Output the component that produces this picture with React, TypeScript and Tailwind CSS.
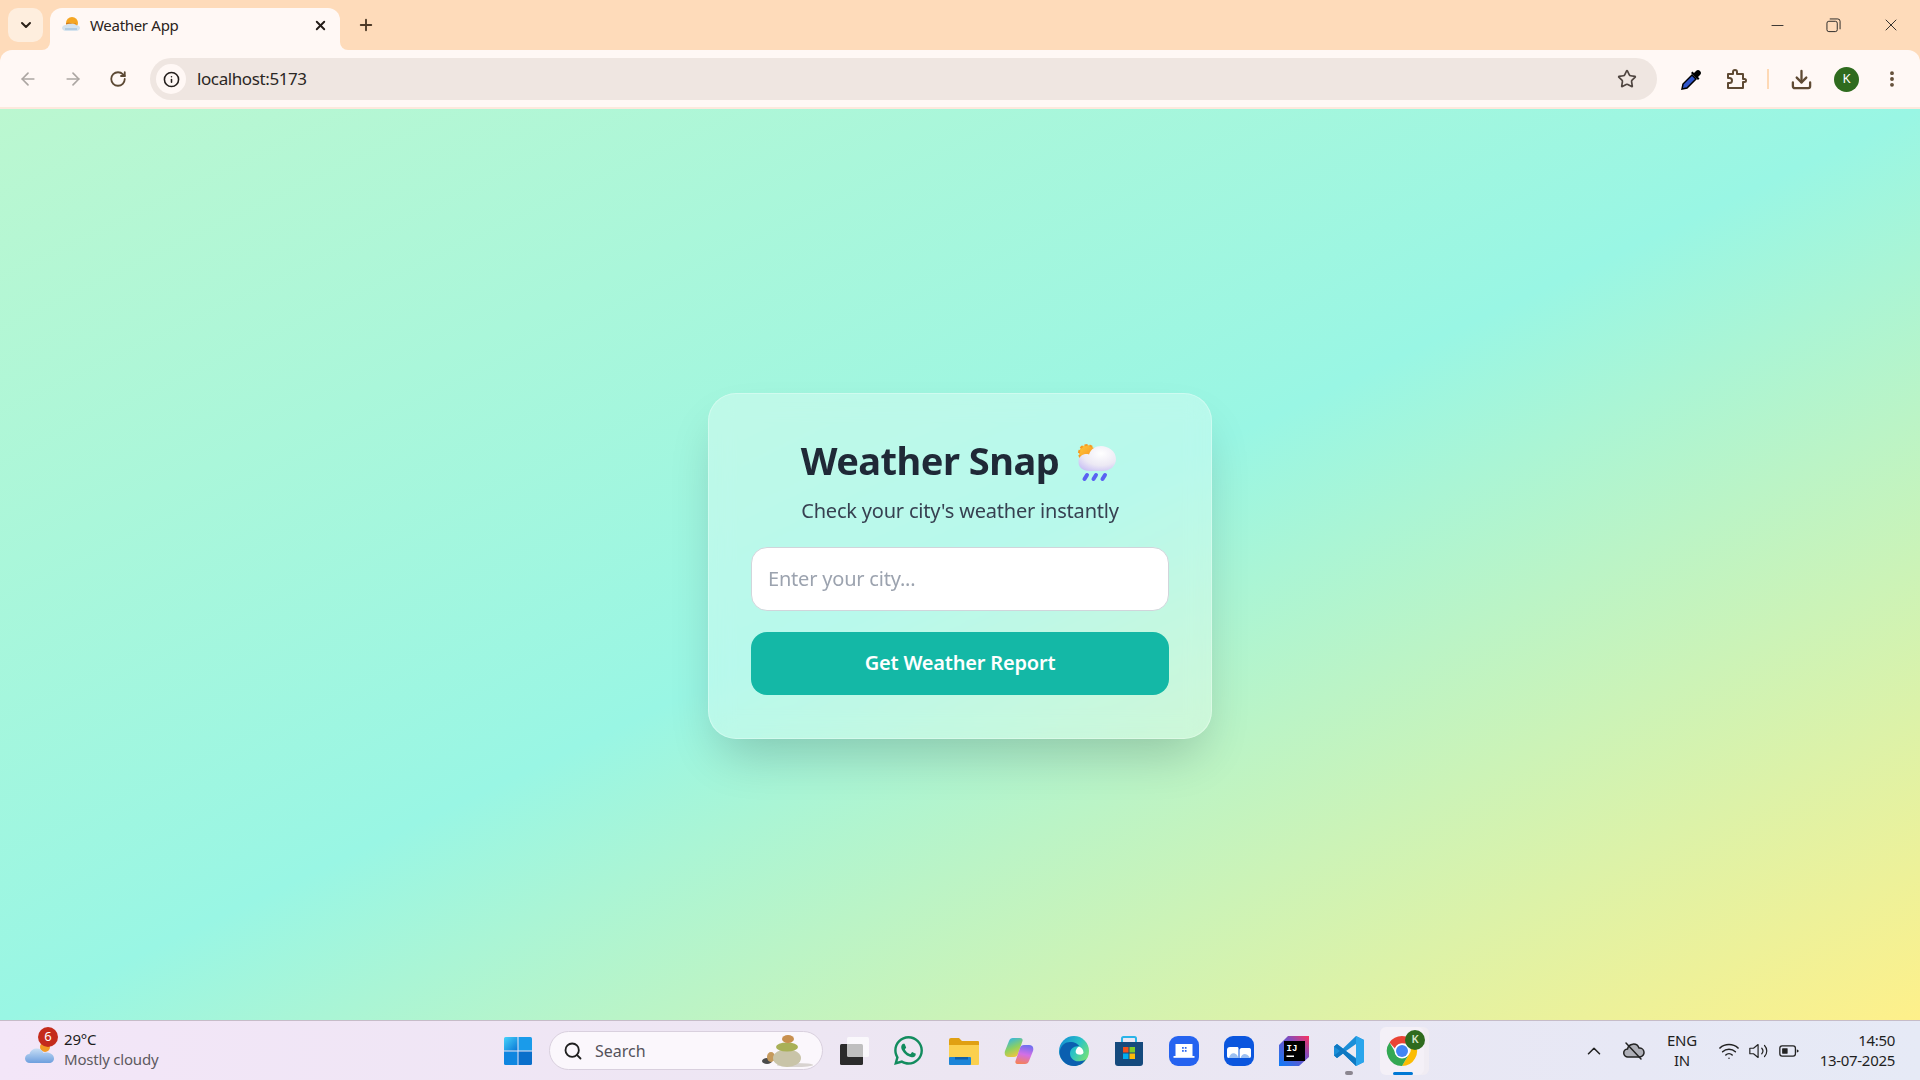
import {
  ArrowLeft,
  ArrowRight,
  ChevronDown,
  ChevronUp,
  Download,
  EllipsisVertical,
  Info,
  Minus,
  Plus,
  RotateCw,
  Search,
  Star,
  Wifi,
  X,
} from "lucide-react";
import { FaWhatsapp } from "react-icons/fa";

const font = "font-['Noto_Sans','Open_Sans',sans-serif]";

const WeatherEmoji = () => (
  <svg viewBox="0 0 60 60" className="w-[60px] h-[60px] shrink-0 -mx-[4px]">
    <defs>
      <radialGradient id="cloudA" cx="0.6" cy="0.3" r="0.8">
        <stop offset="0" stopColor="#ffffff" />
        <stop offset="0.6" stopColor="#ece9f4" />
        <stop offset="1" stopColor="#c9c0f5" />
      </radialGradient>
      <linearGradient id="sunA" x1="0" y1="0" x2="1" y2="1">
        <stop offset="0" stopColor="#ffc93a" />
        <stop offset="1" stopColor="#f58a1f" />
      </linearGradient>
    </defs>
    <circle cx="24" cy="22" r="8" fill="url(#sunA)" stroke="#f79a20" strokeWidth="2" strokeDasharray="3 2" />
    <path
      d="M26 40c-6 0-10.500-3.500-10.500-9s4-8 8-8c1 0 1.500.1 2.500.4C28 18 32.500 15 38 15c7 0 15 5 15 13 0 7-6 12-13 12z"
      fill="url(#cloudA)"
    />
    <g stroke="#5a62f2" strokeWidth="4" strokeLinecap="round">
      <path d="M24 44l-2.500 4" />
      <path d="M33 44l-2.500 4" />
      <path d="M42 44l-2.500 4" />
    </g>
  </svg>
);

const Favicon = () => (
  <svg viewBox="0 0 20 20" className="w-[20px] h-[20px] shrink-0">
    <circle cx="11" cy="8" r="6" fill="#f5a623" />
    <path d="M5 9c2-1 3-1 5 0s4 0 5 0" stroke="#c56a1a" strokeWidth="1" fill="none" />
    <path d="M5 16c-2.500 0-4-1.500-4-3s1.500-3 3.500-3c2-1.500 9-2 11 .2 2 0 3.500 1.300 3.500 2.800S17.500 16 15 16z" fill="#d5e3ee" />
    <path d="M4 14h12" stroke="#8fb6d6" strokeWidth="1" />
  </svg>
);

const Eyedropper = () => (
  <svg viewBox="0 0 24 24" className="w-[24px] h-[24px]">
    <path d="M13 8l4 4-9 9-5 1 1-5z" fill="#2f55c9" stroke="#000" strokeWidth="1.500" />
    <path d="M12 6l7 7 1.500-1.500-1.500-1.500 2-2a2.500 2.500 0 0 0-4-4l-2 2-1.500-1.500z" fill="#000" />
  </svg>
);

const PuzzleIcon = () => (
  <svg viewBox="0 0 24 24" className="w-[24px] h-[24px]" fill="none" stroke="#5f4a33" strokeWidth="2" strokeLinejoin="round">
    <path d="M4 7h5V5a2 2 0 0 1 4 0v2h6v5h1.500a1.500 1.500 0 0 1 0 3H19v6H4v-5h1.500a2.500 2.500 0 0 0 0-5H4z" />
  </svg>
);

const WindowsLogo = () => (
  <svg viewBox="0 0 30 30" className="w-[30px] h-[30px]">
    <defs>
      <linearGradient id="winA" x1="0" y1="0" x2="1" y2="1">
        <stop offset="0" stopColor="#47d3fb" />
        <stop offset="1" stopColor="#0a78d6" />
      </linearGradient>
    </defs>
    <path d="M1 2.500A1.500 1.500 0 0 1 2.500 1H14.500V14.500H1z" fill="url(#winA)" />
    <path d="M15.500 1h12A1.500 1.500 0 0 1 29 2.500V14.500H15.500z" fill="#1a9bea" />
    <path d="M1 15.500H14.500V29H2.500A1.500 1.500 0 0 1 1 27.500z" fill="#0f86e0" />
    <path d="M15.500 15.500H29v12a1.500 1.500 0 0 1-1.500 1.500h-12z" fill="#0a6fcb" />
  </svg>
);

const Stones = () => (
  <svg viewBox="0 0 56 36" className="w-[56px] h-[36px]">
    <ellipse cx="38" cy="32" rx="18" ry="2" fill="#d8d3d0" />
    <ellipse cx="10" cy="28" rx="5" ry="3" fill="#4b4b4b" />
    <ellipse cx="14" cy="24" rx="4" ry="5" fill="#c69a5d" />
    <ellipse cx="30" cy="25" rx="14" ry="9" fill="#c9c4a8" />
    <ellipse cx="30" cy="14" rx="11" ry="4.500" fill="#a9b057" />
    <ellipse cx="31" cy="6" rx="6" ry="4" fill="#c8904f" />
  </svg>
);

const TaskView = () => (
  <svg viewBox="0 0 32 32" className="w-[32px] h-[32px]">
    <rect x="2" y="9" width="23" height="21" rx="1.500" fill="#2b2b2b" />
    <rect x="9" y="2" width="22" height="20" rx="1.500" fill="#ffffff" fillOpacity="0.7" />
  </svg>
);

const FolderIcon = () => (
  <svg viewBox="0 0 32 32" className="w-[32px] h-[32px]">
    <path d="M1 5a2 2 0 0 1 2-2h8l3 3h16a1 1 0 0 1 1 1v3H1z" fill="#e0a012" />
    <path d="M1 10h30v19a1 1 0 0 1-1 1H2a1 1 0 0 1-1-1z" fill="#fbd04e" />
    <rect x="1" y="22" width="22" height="8" fill="#1b84d8" rx="1" />
    <rect x="7" y="22" width="13" height="2.500" fill="#0f5fa8" />
  </svg>
);

const CopilotIcon = () => (
  <svg viewBox="0 0 32 32" className="w-[32px] h-[32px]">
    <defs>
      <linearGradient id="copA" x1="0.2" y1="0" x2="0.6" y2="1">
        <stop offset="0" stopColor="#2fb4e9" />
        <stop offset="0.55" stopColor="#8fd05f" />
        <stop offset="1" stopColor="#f4c53e" />
      </linearGradient>
      <linearGradient id="copB" x1="0.6" y1="0" x2="0.4" y2="1">
        <stop offset="0" stopColor="#6f6ff0" />
        <stop offset="0.5" stopColor="#d36fe6" />
        <stop offset="1" stopColor="#f4815a" />
      </linearGradient>
    </defs>
    <path d="M10 3h7c2 0 3 1 2.500 3L15 19c-.5 2-2 3-4 3H6c-3.500 0-5-2.500-4-6L6 6C6.700 4 8 3 10 3z" fill="url(#copA)" />
    <path d="M22 29h-7c-2 0-3-1-2.500-3L17 13c.5-2 2-3 4-3h5c3.500 0 5 2.500 4 6l-4 10c-.7 2-2 3-4 3z" fill="url(#copB)" />
  </svg>
);

const EdgeIcon = () => (
  <svg viewBox="0 0 32 32" className="w-[32px] h-[32px]">
    <defs>
      <linearGradient id="edgeA" x1="0" y1="0" x2="1" y2="0.6">
        <stop offset="0" stopColor="#0f86d6" />
        <stop offset="0.6" stopColor="#2bc3c6" />
        <stop offset="1" stopColor="#72e07a" />
      </linearGradient>
    </defs>
    <circle cx="16" cy="16" r="15" fill="url(#edgeA)" />
    <path d="M1.500 18C2 10 8 7 12 7c5 0 8 2 9.500 4.500-5-1-9.500 2-9.500 7s5 9 11 7.500c2 0 4-1 5-2-3 5-7 7-12 7-8 0-14-6-14.500-13.500z" fill="#0b5fb0" />
    <path d="M21 11.500c2.500 1 4.500 3 4.500 6 0 1.500-2 2.500-5 2-3-.6-3.500-3-2-5.500.5-1 1.500-2 2.500-2.500z" fill="#fff" />
  </svg>
);

const StoreIcon = () => (
  <svg viewBox="0 0 30 32" className="w-[30px] h-[32px]">
    <path d="M8 7V3.500A1.500 1.500 0 0 1 9.500 2h11A1.500 1.500 0 0 1 22 3.500V7" fill="none" stroke="#2bb4e8" strokeWidth="2" />
    <path d="M1 7h28v21a3 3 0 0 1-3 3H4a3 3 0 0 1-3-3z" fill="#154a7d" />
    <rect x="9" y="12" width="5.500" height="5.500" fill="#f1511b" />
    <rect x="15.500" y="12" width="5.500" height="5.500" fill="#80cc28" />
    <rect x="9" y="18.500" width="5.500" height="5.500" fill="#00adef" />
    <rect x="15.500" y="18.500" width="5.500" height="5.500" fill="#fbbc09" />
  </svg>
);

const LaptopApp = () => (
  <svg viewBox="0 0 30 30" className="w-[30px] h-[30px]">
    <rect width="30" height="30" rx="9" fill="#2563f0" />
    <rect x="6.500" y="8" width="17" height="12" fill="#fff" />
    <rect x="4.500" y="20" width="21" height="1.800" fill="#fff" />
    <g fill="#2563f0">
      <rect x="13" y="11" width="1.800" height="1.800" rx="0.500" />
      <rect x="15.800" y="11" width="1.800" height="1.800" rx="0.500" />
      <rect x="13" y="14" width="1.800" height="1.800" rx="0.500" />
      <rect x="15.800" y="14" width="1.800" height="1.800" rx="0.500" />
    </g>
  </svg>
);

const BookApp = () => (
  <svg viewBox="0 0 30 30" className="w-[30px] h-[30px]">
    <rect width="30" height="30" rx="9" fill="#0b56de" />
    <path d="M3 14c0-2 1-3 3-3h7c1 0 1.500.5 1.500 1.500V22H5c-1.500 0-2-1-2-2z" fill="#fff" />
    <path d="M15.500 14c0-1 1-2 2-2h8c1 0 1.500 1 1.500 2v6c0 1-.5 2-2 2H15.500z" fill="#fff" />
    <path d="M5 22c1-5 5-6 8-3l1.500 3z" fill="#9cc0f2" />
    <path d="M16.500 22c1.500-5 6-5 9-1v1z" fill="#9cc0f2" />
  </svg>
);

const IntellijIcon = () => (
  <svg viewBox="0 0 32 32" className="w-[32px] h-[32px]">
    <defs>
      <linearGradient id="ijA" x1="0" y1="1" x2="1" y2="0">
        <stop offset="0" stopColor="#087cfa" />
        <stop offset="0.6" stopColor="#7a4fc4" />
        <stop offset="1" stopColor="#fe315d" />
      </linearGradient>
    </defs>
    <path d="M10 1h21v21L21 31H1V10z" fill="url(#ijA)" />
    <rect x="6" y="6" width="21" height="20" fill="#000" />
    <text x="8.500" y="15.500" fontSize="9" fontWeight="700" fill="#fff" fontFamily="Liberation Mono, monospace">IJ</text>
    <rect x="8.500" y="20.500" width="7.500" height="1.500" fill="#fff" />
  </svg>
);

const VscodeIcon = () => (
  <svg viewBox="0 0 32 32" className="w-[32px] h-[32px]">
    <path d="M23 1l8 4v22l-8 4-13-12.500L4 23l-3-2.500V11.500L4 9l6 4.500z" fill="#1b8fd8" />
    <path d="M23 1l8 4v22l-8 4z" fill="#2aa5ec" />
    <path d="M23 9L13 16l10 7z" fill="#eceaf2" />
    <path d="M1 11.500L4 9l19 15v7l-13-12.500L4 23l-3-2.500L7 16z" fill="#0e78c2" />
  </svg>
);

const ChromeIcon = () => (
  <svg viewBox="0 0 32 32" className="w-[32px] h-[32px]">
    <path d="M16 1a15 15 0 0 1 13 7.500H16a7.500 7.500 0 0 0-7 5L3.500 7.500A15 15 0 0 1 16 1z" fill="#ea4335" />
    <path d="M29 8.500A15 15 0 0 1 16 31l6.500-11a7.500 7.500 0 0 0-.5-11.500z" fill="#fbbc04" />
    <path d="M16 31A15 15 0 0 1 3.500 7.500L10 18.500a7.500 7.500 0 0 0 12.500 1.500L16 31z" fill="#34a853" />
    <circle cx="16" cy="16" r="7.500" fill="#fff" />
    <circle cx="16" cy="16" r="6" fill="#4285f4" />
  </svg>
);

const CloudOff = () => (
  <svg viewBox="0 0 24 24" className="w-[24px] h-[24px]" fill="none" stroke="#222" strokeWidth="1.500" strokeLinecap="round">
    <path d="M6 18a4 4 0 0 1-.5-8 6 6 0 0 1 11.500-1 4.500 4.500 0 0 1 1 9z" fill="#444" fillOpacity="0.35" />
    <path d="M4 4l15 16" />
  </svg>
);

const VolumeIcon = () => (
  <svg viewBox="0 0 24 24" className="w-[22px] h-[22px]" fill="none" stroke="#222" strokeWidth="1.300" strokeLinejoin="round" strokeLinecap="round">
    <path d="M2 9h4l5-4v14l-5-4H2z" />
    <path d="M15 9a4.500 4.500 0 0 1 0 6" />
    <path d="M18 6a8.500 8.500 0 0 1 0 12" />
  </svg>
);

const BatteryIcon = () => (
  <svg viewBox="0 0 24 24" className="w-[22px] h-[22px]">
    <rect x="2" y="6.500" width="17" height="11" rx="2.500" fill="none" stroke="#222" strokeWidth="1.400" />
    <rect x="4.500" y="9" width="6" height="6" rx="0.500" fill="#222" />
    <path d="M20.500 10l2 1.500v1l-2 1.500z" fill="#222" />
  </svg>
);

const TaskbarCloud = () => (
  <svg viewBox="0 0 32 32" className="w-[32px] h-[32px]">
    <defs>
      <linearGradient id="tbCloud" x1="0" y1="0" x2="0" y2="1">
        <stop offset="0" stopColor="#c7def5" />
        <stop offset="1" stopColor="#6d9fde" />
      </linearGradient>
    </defs>
    <circle cx="21" cy="11" r="5" fill="#f29a25" />
    <path d="M6 27c-3 0-5-2-5-4.500S3 18 5.500 18c.8-3.500 4-5.500 7.500-5.500 3 0 5.500 1.500 6.500 4.500 1-.4 2-.5 3-.5 4 0 7.500 2.500 7.500 6 0 2.500-2 4.500-5 4.500z" fill="url(#tbCloud)" />
  </svg>
);

const taskbarIcons = [
  <TaskView key="task" />,
  <FaWhatsapp key="wa" className="w-[33px] h-[33px] text-[#128c5e]" />,
  <FolderIcon key="folder" />,
  <CopilotIcon key="copilot" />,
  <EdgeIcon key="edge" />,
  <StoreIcon key="store" />,
  <LaptopApp key="laptop" />,
  <BookApp key="book" />,
  <IntellijIcon key="ij" />,
];

export default function App() {
  return (
    <div className={`${font} h-screen flex flex-col overflow-hidden bg-[#fedbba]`}>
      {/* tab strip */}
      <div className="h-[50px] shrink-0 flex bg-[#fedbba] pt-2">
        <div className="ml-2 w-[35px] h-[34px] rounded-[10px] bg-[#feeede] flex items-center justify-center">
          <ChevronDown className="w-4 h-4 text-[#2b2118]" strokeWidth={3} />
        </div>
        <div className="relative ml-[7px] w-[290px] h-[42px] bg-[#fff8f5] rounded-t-[12px] flex items-center pl-[11px] pr-[12px] pb-[8px]">
          <div className="absolute -left-2 bottom-0 w-2 h-2 bg-[#fff8f5]">
            <div className="w-full h-full bg-[#fedbba] rounded-br-[8px]" />
          </div>
          <div className="absolute -right-2 bottom-0 w-2 h-2 bg-[#fff8f5]">
            <div className="w-full h-full bg-[#fedbba] rounded-bl-[8px]" />
          </div>
          <Favicon />
          <span className="ml-[9px] flex-1 text-[15px] text-[#2b2320] tracking-[-0.3px]">Weather App</span>
          <X className="w-[15px] h-[15px] text-[#241c18]" strokeWidth={3} />
        </div>
        <div className="ml-[17px] w-[18px] h-[34px] flex items-center justify-center">
          <Plus className="w-[18px] h-[18px] text-[#4d3a28]" strokeWidth={2.500} />
        </div>
        <div className="flex-1" />
        <div className="flex h-[34px] items-center">
          <div className="w-[56px] flex justify-center"><Minus className="w-[19px] h-[19px] text-[#222]" strokeWidth={1.100} /></div>
          <div className="w-[56px] flex justify-center">
            <svg viewBox="0 0 16 16" className="w-[15px] h-[15px]" fill="none" stroke="#222" strokeWidth="1">
              <rect x="1" y="3.500" width="11" height="11" rx="2" />
              <path d="M4 1h8.500A2.500 2.500 0 0 1 15 3.500V12" />
            </svg>
          </div>
          <div className="w-[59px] flex justify-center"><X className="w-[20px] h-[20px] text-[#222]" strokeWidth={1.100} /></div>
        </div>
      </div>

      {/* toolbar */}
      <div className="h-[59px] shrink-0 bg-[#fff8f5] rounded-t-[12px] border-b-2 border-[#fde9dd] flex items-center pl-[5px] pr-[6px] pt-[1px]">
        <div className="w-[45px] flex justify-center"><ArrowLeft className="w-[20px] h-[20px] text-[#aca6a2]" strokeWidth={2} /></div>
        <div className="w-[45px] flex justify-center"><ArrowRight className="w-[20px] h-[20px] text-[#aca6a2]" strokeWidth={2} /></div>
        <div className="w-[45px] flex justify-center"><RotateCw className="w-[18px] h-[18px] text-[#5c4934]" strokeWidth={2.400} /></div>
        <div className="ml-[10px] flex-1 h-[42px] rounded-full bg-[#efe6e1] flex items-center pl-[6px] pr-[20px]">
          <div className="w-[30px] h-[30px] rounded-full bg-[#fff8f5] flex items-center justify-center">
            <Info className="w-[17px] h-[17px] text-[#241f1c]" strokeWidth={2.200} />
          </div>
          <span className="ml-[11px] flex-1 text-[17px] text-[#2b2724] tracking-[-0.4px]">localhost:5173</span>
          <Star className="w-[20px] h-[20px] text-[#4f4540]" strokeWidth={2} />
        </div>
        <div className="ml-[11px] w-[45px] flex justify-center"><Eyedropper /></div>
        <div className="w-[45px] flex justify-center"><PuzzleIcon /></div>
        <div className="ml-[9px] w-[2px] h-[20px] bg-[#fed9b5]" />
        <div className="ml-[10px] w-[45px] flex justify-center"><Download className="w-[23px] h-[23px] text-[#5f4a33]" strokeWidth={2.400} /></div>
        <div className="w-[45px] flex justify-center">
          <div className="w-[25px] h-[25px] rounded-full bg-[#2f6b1e] text-white text-[13px] flex items-center justify-center">K</div>
        </div>
        <div className="w-[45px] flex justify-center"><EllipsisVertical className="w-[20px] h-[20px] text-[#5f4a33]" strokeWidth={2.600} /></div>
      </div>

      {/* page */}
      <main className="flex-1 min-h-0 flex items-center justify-center bg-[linear-gradient(to_bottom_right,#bbf7d0,#99f6e4,#fef08a)]">
        <div className="mt-[2px] w-[504px] rounded-[28px] border border-white/30 bg-white/30 shadow-[0_25px_50px_-12px_rgba(0,0,0,0.2)] backdrop-blur-md px-[42px] pt-[42px] pb-[43px] flex flex-col items-stretch">
          <h1 className="h-[50px] flex items-center justify-center gap-[8px] text-[38px] font-bold text-[#1f2937] tracking-[-0.5px]">
            <span>Weather Snap</span>
            <WeatherEmoji />
          </h1>
          <p className="mt-[11px] h-[28px] text-center text-[20px] leading-[28px] text-[#374151] tracking-[-0.2px]">
            Check your city's weather instantly
          </p>
          <input
            placeholder="Enter your city..."
            className="mt-[22px] h-[64px] w-full rounded-[16px] border border-[#d1d5db] bg-white px-[16px] text-[20px] tracking-[-0.2px] outline-none placeholder:text-[#9ca3af]"
          />
          <button className="mt-[21px] h-[63px] w-full rounded-[16px] bg-[#14b8a6] text-[20px] font-semibold text-white tracking-[-0.2px]">
            Get Weather Report
          </button>
        </div>
      </main>

      {/* taskbar */}
      <footer className="h-[60px] shrink-0 border-t border-[#c6bcc8] bg-[linear-gradient(to_right,#f3e6f8,#ece6f2_50%,#e7e8f5_85%,#e6eaf6)] flex items-center">
        <div className="w-[490px] shrink-0 flex items-center pl-[24px]">
          <div className="relative w-[32px] h-[32px] mt-[2px]">
            <TaskbarCloud />
            <span className="absolute -top-[9px] left-[14px] w-[20px] h-[20px] rounded-full bg-[#c42b1c] text-white text-[13px] flex items-center justify-center">6</span>
          </div>
          <div className="ml-[8px] -mt-[3px] flex flex-col leading-[20px] text-[15px] tracking-[-0.2px]">
            <span className="text-[#1c1c1c]">29°C</span>
            <span className="text-[#5d5a60]">Mostly cloudy</span>
          </div>
        </div>
        <div className="w-[55px] shrink-0 flex justify-center"><WindowsLogo /></div>
        <div className="ml-[4px] w-[274px] h-[39px] shrink-0 rounded-full border border-[#d9d0de] bg-[#fbf7fc] flex items-center pl-[13px] pr-[9px]">
          <Search className="w-[20px] h-[20px] text-[#1f1f1f]" strokeWidth={2.200} />
          <span className="ml-[12px] flex-1 text-[16px] text-[#55525a]">Search</span>
          <Stones />
        </div>
        <div className="ml-[3px] flex shrink-0">
          {taskbarIcons.map((icon, i) => (
            <div key={i} className="w-[55px] h-[59px] flex items-center justify-center">{icon}</div>
          ))}
          <div className="relative w-[55px] h-[59px] flex items-center justify-center">
            <VscodeIcon />
            <span className="absolute bottom-[5px] left-[24px] w-[8px] h-[4px] rounded-full bg-[#8b8690]" />
          </div>
          <div className="relative w-[44px] ml-[4px] mr-[5px] h-[48px] self-center rounded-[6px] bg-[#f4f0f7] shadow-[5px_0_0_#f0ecf3] flex items-center justify-center">
            <ChromeIcon />
            <span className="absolute top-[3px] left-[25px] w-[20px] h-[20px] rounded-full bg-[#2f6b1e] text-[#d8e6cc] text-[11px] font-semibold flex items-center justify-center">K</span>
            <span className="absolute bottom-0 left-[13px] w-[20px] h-[3px] rounded-full bg-[#0078d4]" />
          </div>
        </div>
        <div className="flex-1 flex items-center justify-end pr-[25px]">
          <ChevronUp className="w-[22px] h-[22px] text-[#222]" strokeWidth={1.700} />
          <div className="ml-[17px]"><CloudOff /></div>
          <div className="ml-[16px] -mt-[2px] w-[40px] text-center text-[15px] leading-[20px] text-[#1f1f1f] tracking-[-0.2px]">
            <div>ENG</div>
            <div>IN</div>
          </div>
          <Wifi className="ml-[16px] w-[22px] h-[22px] text-[#222]" strokeWidth={1.600} />
          <div className="ml-[8px]"><VolumeIcon /></div>
          <div className="ml-[8px]"><BatteryIcon /></div>
          <div className="ml-[15px] -mt-[2px] w-[80px] text-right text-[15px] leading-[20px] text-[#1f1f1f] tracking-[-0.3px]">
            <div>14:50</div>
            <div>13-07-2025</div>
          </div>
        </div>
      </footer>
    </div>
  );
}
